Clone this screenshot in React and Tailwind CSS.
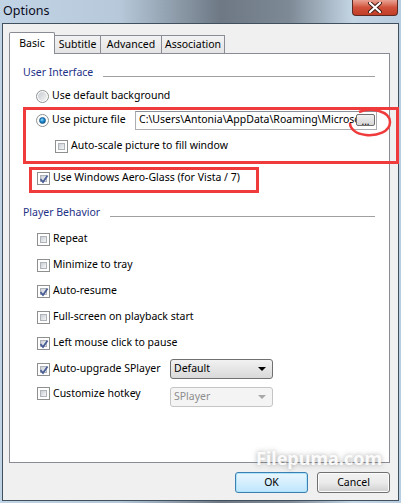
import React from 'react';

const font = { fontFamily: '"Noto Sans", "Open Sans", Arial, sans-serif' };

const Checkbox = ({ checked, disabled }) => (
  <span className="relative w-[13px] h-[13px] shrink-0 border border-[#8e8f8f] bg-white p-[2px]">
    <span className="block w-full h-full bg-gradient-to-br from-[#cbcfd5] to-[#f6f6f6] border border-[#aeb3b9]" />
    {checked && (
      <svg className="absolute left-[1px] top-[1px]" width="10" height="10" viewBox="0 0 10 10">
        <path d="M1.5 5.2 L4 8 L8.6 1.4" fill="none" stroke={disabled ? '#999' : '#4a5f97'} strokeWidth="1.8" />
      </svg>
    )}
  </span>
);

const Radio = ({ checked }) => (
  <span className="w-[13px] h-[13px] shrink-0 rounded-full border border-[#8e8f8f] bg-white flex items-center justify-center">
    {checked ? (
      <span className="w-[7px] h-[7px] rounded-full bg-[radial-gradient(circle_at_40%_35%,#8fd8ff_0%,#1b8ad0_45%,#0d4b7a_100%)] border border-[#1a5d8f]" />
    ) : (
      <span className="w-[9px] h-[9px] rounded-full bg-gradient-to-br from-[#c8ccd1] to-[#f4f4f4]" />
    )}
  </span>
);

const CheckRow = ({ label, checked, className = '' }) => (
  <div className={`flex items-center gap-[3px] h-[20px] ${className}`}>
    <Checkbox checked={checked} />
    <span>{label}</span>
  </div>
);

const GroupHeader = ({ title, className = '' }) => (
  <div className={`flex items-center h-[16px] pl-[13px] pr-[14px] ${className}`}>
    <span className="text-[#1e3287]">{title}</span>
    <span className="flex-1 h-px bg-[#a0a0a0] ml-[10px] mt-[6px]" />
  </div>
);

const Select = ({ value, disabled }) => (
  <div
    className={`w-[103px] h-[20px] rounded-[3px] border flex items-center justify-between pl-[3px] pr-[6px] ${
      disabled
        ? 'border-[#c5c5c5] bg-[#f4f4f4] text-[#8d8d8d]'
        : 'border-[#707070] bg-gradient-to-b from-[#f2f2f2] to-[#d9d9d9]'
    }`}
  >
    <span>{value}</span>
    <svg width="8" height="4" viewBox="0 0 8 4">
      <path d="M0 0 H8 L4 4 Z" fill={disabled ? '#a8a8a8' : '#000'} />
    </svg>
  </div>
);

const Tab = ({ label, active, width }) =>
  active ? (
    <div className={`relative z-10 h-[22px] pt-[3px] text-center bg-white border border-b-0 border-[#898c95] rounded-t-[2px] ${width}`}>
      {label}
    </div>
  ) : (
    <div className={`h-[19px] pt-[1px] text-center bg-gradient-to-b from-[#f3f3f3] to-[#e3e3e3] border border-b-0 border-l-0 border-[#898c95] ${width}`}>
      {label}
    </div>
  );

export default function App() {
  return (
    <div
      className="relative w-[401px] h-[503px] overflow-hidden flex flex-col bg-[linear-gradient(to_right,#c1d4e6_0%,#b6c8d9_30%,#6d7884_55%,#7d8995_72%,#c4d5e4_88%,#b9cde0_100%)] text-[10.5px] text-black"
      style={font}
    >
      {/* title bar */}
      <div className="relative h-[23px] shrink-0 flex items-start">
        <span className="pl-[3px] pt-[2px] text-[12.5px] text-[#0b0b1a]">Options</span>
        <div className="absolute right-[3px] top-0 w-[46px] h-[16px] rounded-b-[4px] border border-t-0 border-[#5b2a24] bg-gradient-to-b from-[#e8a293] via-[#d0513b] to-[#c23d26] flex items-center justify-center">
          <svg width="14" height="11" viewBox="0 0 14 11">
            <path d="M2 1 L12 10 M12 1 L2 10" stroke="#3b1a16" strokeWidth="4" strokeLinecap="round" />
            <path d="M2 1 L12 10 M12 1 L2 10" stroke="#fff" strokeWidth="2.2" strokeLinecap="round" />
          </svg>
        </div>
      </div>

      {/* dialog body */}
      <div className="flex-1 mx-[2px] mb-[2px] border border-[#41505f] bg-[#f0f0f0] flex flex-col pt-[8px] pl-[6px]">
        <div className="flex items-end -mb-px">
          <Tab label="Basic" active width="w-[46px]" />
          <div className="flex items-end border-l border-[#898c95] -ml-px">
            <Tab label="Subtitle" width="w-[46px]" />
            <Tab label="Advanced" width="w-[61px]" />
            <Tab label="Association" width="w-[63px]" />
          </div>
        </div>

        <div className="w-[381px] h-[410px] bg-white border border-[#898c95] flex flex-col pt-[11px]">
          <GroupHeader title="User Interface" />
          <div className="flex items-center gap-[3px] h-[20px] mt-[5px] pl-[26px]">
            <Radio />
            <span>Use default background</span>
          </div>
          <div className="flex items-center h-[18px] mt-[5px] pl-[26px]">
            <div className="w-[99px] flex items-center gap-[3px]">
              <Radio checked />
              <span>Use picture file</span>
            </div>
            <div className="w-[242px] h-[19px] border border-[#abadb3] border-t-[#8e9199] bg-white flex items-center pl-[3px] pr-[1px]">
              <div className="flex-1 overflow-hidden whitespace-nowrap">C:\Users\Antonia\AppData\Roaming\Microsoft\SPlayer</div>
              <div className="w-[19px] h-[12px] shrink-0 rounded-[2px] border border-[#707070] bg-gradient-to-b from-[#f2f2f2] to-[#d6d6d6] flex items-end justify-center leading-[8px] text-[10px]">
                ...
              </div>
            </div>
          </div>
          <CheckRow label="Auto-scale picture to fill window" className="mt-[7px] pl-[45px]" />
          <CheckRow label="Use Windows Aero-Glass (for Vista / 7)" checked className="mt-[12px] pl-[27px]" />

          <GroupHeader title="Player Behavior" className="mt-[17px]" />
          <CheckRow label="Repeat" className="mt-[8px] pl-[27px]" />
          <CheckRow label="Minimize to tray" className="mt-[6px] pl-[27px]" />
          <CheckRow label="Auto-resume" checked className="mt-[6px] pl-[27px]" />
          <CheckRow label="Full-screen on playback start" className="mt-[6px] pl-[27px]" />
          <CheckRow label="Left mouse click to pause" checked className="mt-[6px] pl-[27px]" />
          <div className="flex items-center h-[20px] mt-[6px] pl-[27px]">
            <div className="w-[133px] flex items-center gap-[3px]">
              <Checkbox checked />
              <span>Auto-upgrade SPlayer</span>
            </div>
            <Select value="Default" />
          </div>
          <div className="flex items-start h-[20px] mt-[6px] pl-[27px]">
            <div className="w-[133px] flex items-center gap-[3px] h-[17px]">
              <Checkbox />
              <span>Customize hotkey</span>
            </div>
            <div className="mt-[2px]">
              <Select value="SPlayer" disabled />
            </div>
          </div>
        </div>

        <div className="flex justify-end gap-[9px] w-[381px] mt-[9px]">
          <button className="w-[73px] h-[21px] rounded-[3px] border border-[#3c7fb1] bg-gradient-to-b from-[#eaf6fd] to-[#bee6fd] shadow-[inset_0_0_0_1px_#aee4fb]">
            OK
          </button>
          <button className="w-[73px] h-[21px] rounded-[3px] border border-[#707070] bg-gradient-to-b from-[#f2f2f2] via-[#ebebeb] to-[#cfcfcf] shadow-[inset_0_0_0_1px_#fcfcfc]">
            Cancel
          </button>
        </div>
      </div>

      {/* annotations */}
      <div className="absolute left-[23px] top-[107px] w-[376px] h-[57px] border-[3px] border-[#ef3b3b]" />
      <div className="absolute left-[29px] top-[167px] w-[230px] h-[26px] border-[3px] border-[#ef3b3b]" />
      <svg className="absolute left-[347px] top-[108px]" width="46" height="30" viewBox="0 0 46 30">
        <path d="M12 4 C24 -1 43 3 43 14 C43 24 30 28 19 27 C9 26 3 21 3 15" fill="none" stroke="#ef3b3b" strokeWidth="2.5" />
      </svg>

      <span className="absolute left-[256px] top-[445px] text-[18px] font-bold text-white/90 [text-shadow:0_0_5px_rgba(90,90,90,0.55)]">
        Filepuma.com
      </span>
    </div>
  );
}
